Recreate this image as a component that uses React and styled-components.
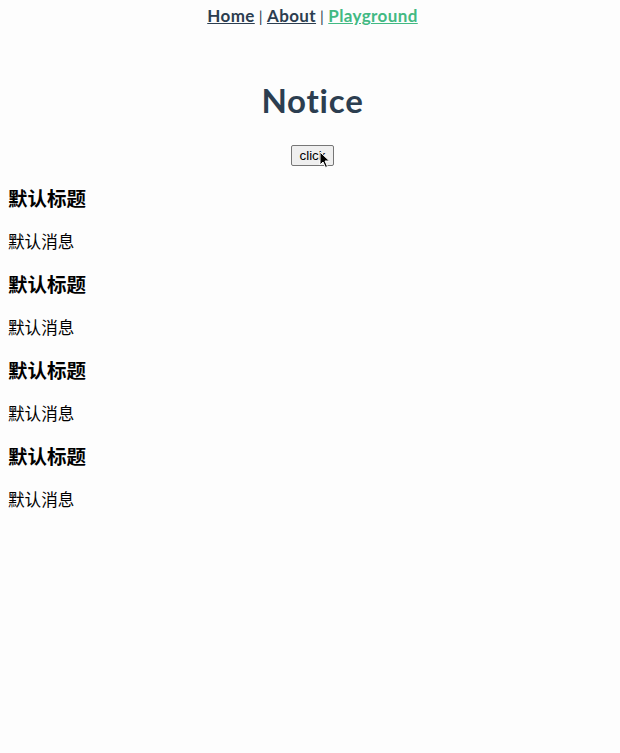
import styled, { createGlobalStyle } from "styled-components";

const GlobalStyle = createGlobalStyle`
    html, body {
        margin: 0;
        background: #fdfdfd;
    }
`;

const Page = styled.div`
    min-height: 753px;
    font-family: Lato, "Noto Sans", sans-serif;
    color: #000;
`;

const Centered = styled.div`
    padding-left: 5px;
`;

const Nav = styled.nav`
    text-align: center;
    padding: 6px 0 0;
    font-size: 17px;
    font-weight: 700;
    letter-spacing: 0.4px;
    color: #2c3e50;
    line-height: 20px;
`;

const NavLink = styled.a`
    color: ${props => props.active ? '#42b983' : '#2c3e50'};
    text-decoration: underline;
    cursor: pointer;
`;

const Sep = styled.span`
    font-weight: 400;
    font-size: 15px;
    margin: 0 4px;
    color: #2c3e50;
`;

const Title = styled.h1`
    text-align: center;
    color: #2c3e50;
    font-size: 33px;
    letter-spacing: 0.8px;
    font-weight: 700;
    margin: 54px 0 0;
    line-height: 40px;
`;

const ButtonRow = styled.div`
    display: flex;
    justify-content: center;
    margin-top: 24px;
`;

const ButtonWrap = styled.div`
    position: relative;
`;

const ClickButton = styled.button`
    font-family: "Liberation Sans", Arial, sans-serif;
    font-size: 13.33px;
    height: 21px;
    padding: 0 8px;
    border: 1px solid #767676;
    border-radius: 2px;
    background: #efefef;
    color: #000;
`;

const Cursor = styled.svg`
    position: absolute;
    left: 28px;
    top: 7px;
`;

const List = styled.div`
    padding: 0 8px;
    margin-top: 11px;
    font-family: "Noto Sans CJK SC", sans-serif;
`;

const Item = styled.div`
    display: flex;
    flex-direction: column;
`;

const ItemTitle = styled.h3`
    font-size: 19.5px;
    font-weight: 700;
    margin: 10px 0 0;
    line-height: 22px;
`;

const ItemMsg = styled.p`
    font-size: 16.6px;
    margin: 21px 0 11px;
    line-height: 22px;
`;

const items = Array.from({ length: 4 }, () => ({ title: '默认标题', message: '默认消息' }));

const App = () => {
    return (
        <Page>
            <GlobalStyle />
            <Centered>
                <Nav>
                    <NavLink>Home</NavLink>
                    <Sep>|</Sep>
                    <NavLink>About</NavLink>
                    <Sep>|</Sep>
                    <NavLink active>Playground</NavLink>
                </Nav>
                <Title>Notice</Title>
                <ButtonRow>
                    <ButtonWrap>
                        <ClickButton>click</ClickButton>
                        <Cursor width="12" height="18" viewBox="0 0 12 18">
                            <path d="M1 1 L1 14 L4 11 L6.5 16.5 L8.5 15.5 L6 10 L10.5 10 Z" fill="#000" stroke="#fff" strokeWidth="1" />
                        </Cursor>
                    </ButtonWrap>
                </ButtonRow>
            </Centered>
            <List>
                {items.map((item, i) => (
                    <Item key={i}>
                        <ItemTitle>{item.title}</ItemTitle>
                        <ItemMsg>{item.message}</ItemMsg>
                    </Item>
                ))}
            </List>
        </Page>
    );
};

export default App;
